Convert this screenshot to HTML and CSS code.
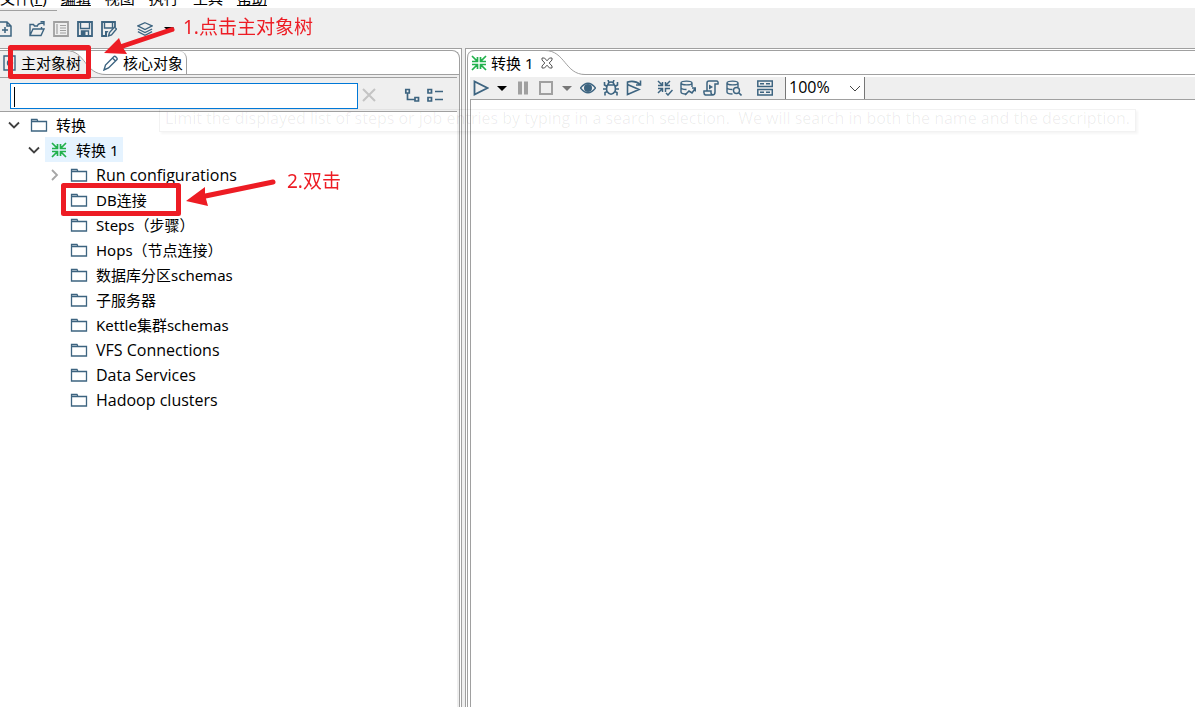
FILE: index.html
```html
<!DOCTYPE html>
<html lang="zh-CN">
<head>
<meta charset="utf-8">
<title>Spoon - 转换 1</title>
<link rel="stylesheet" href="styles.css">
</head>
<body>
<svg class="defs" aria-hidden="true">
  <symbol id="folder" viewBox="0 0 18 16"><path d="M1.500 14V2.500h5.500l1 2h8.500V14z M1.500 4.500h7" fill="none" stroke="#3d6480" stroke-width="1.300"/></symbol>
  <symbol id="trans" viewBox="0 0 16 16"><path d="M1 1l5 5M15 1l-5 5M1 15l5-5M15 15l-5-5M6.500 2v4.500H1M9.500 2v4.500H15M6.500 14V9.500H1M9.500 14V9.500H15" fill="none" stroke="currentColor" stroke-width="1.700"/></symbol>
  <symbol id="down" viewBox="0 0 16 16"><path d="M3 5.500l5 5 5-5" fill="none" stroke="#404040" stroke-width="1.800"/></symbol>
  <symbol id="caret" viewBox="0 0 16 16"><path d="M3 6h10l-5 5z" fill="currentColor"/></symbol>
  <symbol id="db" viewBox="0 0 16 16"><path d="M1 3c0-2.500 11-2.500 11 0s-11 2.500-11 0v9c0 1.500 3 2 5.500 2M12 3v4M1 7.500c0 1.500 3 2 5.500 2" fill="none" stroke="currentColor" stroke-width="1.400"/></symbol>
</svg>

<nav class="menu">
  <a href="#">文件(<u>F</u>)</a><a href="#"><u>编辑</u></a><a href="#">视图</a><a href="#">执行</a><a href="#">工具</a><a href="#"><u>帮助</u></a>
</nav>

<header class="toolbar">
  <button aria-label="新建"><svg viewBox="0 0 16 16"><path d="M2 1h8l4 4v10H2zM10 1v4h4M5 9h6M8 6v6" fill="none" stroke="currentColor" stroke-width="1.500"/></svg></button>
  <i class="space"></i>
  <button aria-label="打开"><svg viewBox="0 0 16 16"><path d="M9 5H5.500L4.500 3.500H1V14.500h11l3-6.500H4L1 14.500M12.500 8V6M8.500 4.500c1-2 3-2.500 6-2.500M11.500 .500h3.500v4" fill="none" stroke="currentColor" stroke-width="1.400"/></svg></button>
  <button class="off" aria-label="资源库"><svg viewBox="0 0 16 16"><path d="M1 1h14v14H1z" fill="none" stroke="currentColor" stroke-width="1.800"/><path d="M4 3v10M7 4.500h6M7 7h6M7 9.500h6M7 12h6" stroke="currentColor" stroke-width="1.200"/></svg></button>
  <button aria-label="保存"><svg viewBox="0 0 16 16"><path d="M1 1h14v14H1z" fill="none" stroke="currentColor" stroke-width="1.800"/><path d="M3.500 1.500v6h9v-6M4.500 14.500v-4.500h7v4.500" fill="none" stroke="currentColor" stroke-width="1.400"/><path d="M4.500 10h4v5h-4z" fill="currentColor"/></svg></button>
  <button aria-label="另存为"><svg viewBox="0 0 16 16"><path d="M6 15H1V1h13v5" fill="none" stroke="currentColor" stroke-width="1.800"/><path d="M3.500 1.500v5.500h8v-5.500" fill="none" stroke="currentColor" stroke-width="1.400"/><path d="M4 10h3.500l-1.500 2v3H4z" fill="currentColor"/><path d="M7.500 15l1-3.500L13.500 6l2 2-5 6z" fill="none" stroke="currentColor" stroke-width="1.400"/></svg></button>
  <i class="space wide"></i>
  <button aria-label="透视图"><svg viewBox="0 0 18 16"><path d="M9 1l8 3.500L9 8.500 1 4.500zM1 8l8 4 8-4M1 11l8 4 8-4" fill="none" stroke="currentColor" stroke-width="1.400"/></svg></button>
  <button class="black" aria-label="更多"><svg><use href="#caret"/></svg></button>
</header>

<main class="panes">
  <section class="pane side">
    <div class="folder">
      <div class="tabs" role="tablist">
        <svg class="curve" viewBox="0 0 106 25"><path d="M0 0H66C86 0 84 24.500 106 24.500V25H0z" fill="#efefef"/><path d="M0 .5H66C86 .5 84 24.500 106 24.500" fill="none" stroke="#a0a0a0"/></svg>
        <button class="tab main-tab" role="tab" aria-selected="true"><svg class="steel" viewBox="0 0 16 16"><path d="M3 1h11v14H3z" fill="none" stroke="currentColor" stroke-width="1.400"/><circle cx="9" cy="8" r="2.500" fill="none" stroke="currentColor" stroke-width="1.400"/></svg>主对象树</button>
        <button class="tab core-tab" role="tab" aria-selected="false"><svg class="steel" viewBox="0 0 16 16"><path d="M1 15l1.500-5L11 1.500c1-1 4 2 3 3L5.500 13zM9.500 3l3.500 3.500" fill="none" stroke="currentColor" stroke-width="1.400"/></svg>核心对象</button>
      </div>
      <div class="content">
        <div class="search">
          <input class="field" type="text" aria-label="搜索" autofocus>
          <span class="cursor"></span>
          <button class="clear" aria-label="清除"><svg viewBox="0 0 16 16"><path d="M2 2l12 12M14 2L2 14" stroke="currentColor" stroke-width="2"/></svg></button>
          <button aria-label="展开"><svg viewBox="0 0 16 16"><path d="M1.800 2.500h3.500v3.500h-3.500zM11 10.500h3.500v3.500h-3.500zM3.500 6v6.500H11" fill="none" stroke="currentColor" stroke-width="1.700"/></svg></button>
          <button aria-label="折叠"><svg viewBox="0 0 16 16"><path d="M1 2.500h3.500v3.500H1zM1 10.500h3.500v3.500H1zM8 4.500h8M8 12.500h8" fill="none" stroke="currentColor" stroke-width="1.700"/></svg></button>
        </div>
        <ul class="tree" role="tree">
          <li role="treeitem"><div class="row"><svg class="twist"><use href="#down"/></svg><span class="item"><svg><use href="#folder"/></svg>转换</span></div>
            <ul role="group">
              <li role="treeitem"><div class="row"><svg class="twist"><use href="#down"/></svg><span class="item selected"><svg class="green"><use href="#trans"/></svg>转换 1</span></div>
                <ul role="group">
                  <li class="row" role="treeitem"><svg class="twist" viewBox="0 0 16 16"><path d="M6 3l5 5-5 5" fill="none" stroke="#a6a6a6" stroke-width="1.800"/></svg><span class="item latin"><svg><use href="#folder"/></svg>Run configurations</span></li>
                  <li class="row" role="treeitem"><i class="twist"></i><span class="item"><svg><use href="#folder"/></svg>DB连接</span></li>
                  <li class="row" role="treeitem"><i class="twist"></i><span class="item"><svg><use href="#folder"/></svg>Steps（步骤）</span></li>
                  <li class="row" role="treeitem"><i class="twist"></i><span class="item"><svg><use href="#folder"/></svg>Hops（节点连接）</span></li>
                  <li class="row" role="treeitem"><i class="twist"></i><span class="item"><svg><use href="#folder"/></svg>数据库分区schemas</span></li>
                  <li class="row" role="treeitem"><i class="twist"></i><span class="item"><svg><use href="#folder"/></svg>子服务器</span></li>
                  <li class="row" role="treeitem"><i class="twist"></i><span class="item"><svg><use href="#folder"/></svg>Kettle集群schemas</span></li>
                  <li class="row" role="treeitem"><i class="twist"></i><span class="item latin"><svg><use href="#folder"/></svg>VFS Connections</span></li>
                  <li class="row" role="treeitem"><i class="twist"></i><span class="item latin"><svg><use href="#folder"/></svg>Data Services</span></li>
                  <li class="row" role="treeitem"><i class="twist"></i><span class="item latin"><svg><use href="#folder"/></svg>Hadoop clusters</span></li>
                </ul>
              </li>
            </ul>
          </li>
        </ul>
      </div>
    </div>
  </section>

  <section class="pane editor">
    <div class="folder">
      <div class="tabs" role="tablist">
        <svg class="curve" viewBox="0 0 118 25"><path d="M0 25V8Q0 .5 8 .5H78C98 .5 98 24.500 118 24.500V25z" fill="#fff"/><path d="M.5 25V8Q.5 .5 8 .5H78C98 .5 98 24.500 118 24.500" fill="none" stroke="#a0a0a0"/></svg>
        <button class="tab" role="tab" aria-selected="true"><svg class="green"><use href="#trans"/></svg>转换 1</button>
        <button class="close" aria-label="关闭"><svg viewBox="0 0 12 12"><path d="M1 1h2.500L6 3.800 8.500 1H11v2L8.200 6 11 9v2H8.500L6 8.200 3.500 11H1V9l2.800-3L1 3z" fill="none" stroke="#555"/></svg></button>
      </div>
      <div class="actions">
        <button aria-label="运行"><svg viewBox="0 0 16 16"><path d="M1.500 1.500v13L14.500 8z" fill="none" stroke="currentColor" stroke-width="1.800"/></svg></button>
        <button class="slim black" aria-label="运行选项"><svg><use href="#caret"/></svg></button>
        <button class="off" aria-label="暂停"><svg viewBox="0 0 16 16"><path d="M5 1.500v13M11 1.500v13" stroke="currentColor" stroke-width="4"/></svg></button>
        <button class="off" aria-label="停止"><svg viewBox="0 0 16 16"><path d="M2 2h12v12H2z" fill="none" stroke="currentColor" stroke-width="2"/></svg></button>
        <button class="slim gray" aria-label="停止选项"><svg><use href="#caret"/></svg></button>
        <button aria-label="预览"><svg viewBox="0 0 16 16"><path d="M.5 8Q8-1.500 15.500 8 8 17.500.5 8z" fill="none" stroke="currentColor" stroke-width="1.300"/><circle cx="8" cy="8" r="4" fill="currentColor"/></svg></button>
        <button aria-label="调试"><svg viewBox="0 0 16 16"><path d="M4.500 5h7Q13 8 12 11.500 8 17 4 11.500 3 8 4.500 5zM5 5Q5 2 8 2t3 3M5 0l1 2.500M11 0l-1 2.500M4 9H0M12 9h4M4 6.500L1.500 5V2M12 6.500L14.500 5V2M4.500 11.500L2 12.500v3M11.500 11.500L14 12.500v3" fill="none" stroke="currentColor" stroke-width="1.600"/></svg></button>
        <button aria-label="重放"><svg viewBox="0 0 16 16"><path d="M1.500 4.500v10L13 9.500zM1.500 4V2Q9 0 14 4.500M14.500 .5v4.500H10" fill="none" stroke="currentColor" stroke-width="1.600"/></svg></button>
        <i class="space"></i>
        <button aria-label="验证"><svg viewBox="0 0 16 16"><path d="M1 1l4 4M13 1L9 5M1 13l4-4M5.500 2v3.500H1M8.500 2v3.500H13M5.500 12V8.500H1M8.500 12V8.500H13M9 13l2 2 4.500-5" fill="none" stroke="currentColor" stroke-width="1.500"/></svg></button>
        <button aria-label="影响分析"><svg viewBox="0 0 16 16"><use href="#db"/><path d="M5 15l4-4 3 2 3.500-5M12 8h3.500v3.500" fill="none" stroke="currentColor" stroke-width="1.600"/></svg></button>
        <button aria-label="SQL"><svg viewBox="0 0 16 16"><path d="M4 11V3q0-2 2-2h7.500q2 0 1.500 3h-3v8q0 3-2.500 3H2.500Q.5 14.500 1 11h7v2q.5 2 2 2" fill="none" stroke="currentColor" stroke-width="1.500"/><path d="M6 4.500v5L10 7z" fill="currentColor"/></svg></button>
        <button aria-label="浏览数据库"><svg viewBox="0 0 16 16"><use href="#db"/><circle cx="10.500" cy="10.500" r="3" fill="none" stroke="currentColor" stroke-width="1.400"/><path d="M13 13l2.500 2.500" stroke="currentColor" stroke-width="1.600"/></svg></button>
        <i class="space"></i>
        <button aria-label="显示结果"><svg viewBox="0 0 16 16"><path d="M.8 1h14.500v5.500H.8zM.8 9.500h14.500V15H.8zM3 3.800h4M9 3.800h4M3 12.300h4M9 12.300h4" fill="none" stroke="currentColor" stroke-width="1.500"/></svg></button>
        <i class="space"></i>
        <label class="zoom"><select aria-label="缩放"><option>100%</option></select><svg viewBox="0 0 16 16"><path d="M3 6l5 5 5-5" fill="none" stroke="#444"/></svg></label>
      </div>
      <div class="canvas"></div>
    </div>
  </section>
</main>

<div class="tooltip">Limit the displayed list of steps or job entries by typing in a search selection.&nbsp; We will search in both the name and the description.</div>

<svg class="marks" viewBox="0 0 400 240" aria-hidden="true">
  <g fill="none" stroke="#ed1c24" stroke-linejoin="round">
    <rect x="10.500" y="47.500" width="78" height="29" stroke-width="5"/>
    <rect x="63.500" y="185.500" width="115" height="28" stroke-width="5"/>
    <path d="M172 29.500L120 47M273 182L203 196.500" stroke-width="5" stroke-linecap="round"/>
  </g>
  <path d="M104 53L119 38 122 46 127 54zM186 201L205 187 205 195 208 206z" fill="#ed1c24"/>
</svg>
<span class="note first">1.点击主对象树</span>
<span class="note second">2.双击</span>
</body>
</html>
```

FILE: styles.css
```css
* { box-sizing: border-box; }
body {
  margin: 0;
  height: 100vh;
  display: flex;
  flex-direction: column;
  overflow: hidden;
  position: relative;
  background: #fff;
  color: #000;
  font: 15px/24px "Noto Sans", "Noto Sans CJK SC", sans-serif;
}
button {
  border: 0;
  padding: 0;
  background: none;
  color: #3d6480;
  font: inherit;
  flex: none;
  display: flex;
  align-items: center;
  justify-content: center;
}
svg { width: 16px; height: 16px; flex: none; }
ul { margin: 0; padding: 0; list-style: none; }
.defs { position: absolute; width: 0; height: 0; }
.green { color: #22b14c; }
.steel { color: #3d6480; }
.off { color: #a0a0a0; }
.black { color: #000; }
.gray { color: #777; }
.space { width: 8px; flex: none; }
.space.wide { width: 12px; }

.menu {
  height: 8px;
  flex: none;
  display: flex;
  align-items: flex-end;
  gap: 14px;
  overflow: hidden;
}
.menu a { color: #000; text-decoration: none; white-space: nowrap; line-height: 20px; }

.toolbar {
  height: 40px;
  flex: none;
  display: flex;
  align-items: center;
  padding-top: 2px;
  background: linear-gradient(#a0a0a0, #a0a0a0) 0 2px / 57px 1px no-repeat #efefef;
}
.toolbar button { width: 24px; height: 24px; }
.toolbar button:first-child { margin-left: -7px; }

.panes { flex: 1; min-height: 0; display: flex; gap: 3px; background: #efefef; }
.pane { border-top: 1px solid #a0a0a0; padding-top: 1px; background: #fff; display: flex; }
.side { flex: 0 0 38.66%; border-right: 1px solid #a0a0a0; padding-right: 1px; }
.editor { flex: 1; min-width: 0; border-left: 1px solid #a0a0a0; padding-left: 1px; }
.folder { flex: 1; min-width: 0; display: flex; flex-direction: column; border-top: 1px solid #a0a0a0; }
.side .folder { border-right: 1px solid #a0a0a0; border-top-right-radius: 8px; }
.editor .folder { border-left: 1px solid #a0a0a0; border-top-left-radius: 8px; }

.tabs {
  height: 24px;
  flex: none;
  display: flex;
  position: relative;
  border-bottom: 1px solid #a0a0a0;
}
.curve { position: absolute; left: 0; top: -1px; height: 25px; width: 106px; }
.editor .curve { left: -1px; width: 118px; }
.tab { position: relative; gap: 4px; color: #000; }
.main-tab { padding-left: 1px; }
.core-tab {
  margin-left: 22px;
  padding-right: 3px;
  border-right: 1px solid #a0a0a0;
  border-top-right-radius: 8px;
}
.editor .tab { padding-left: 3px; }
.close { position: relative; margin-left: 8px; }
.close svg { width: 12px; height: 12px; }

.content {
  flex: 1;
  min-height: 0;
  display: flex;
  flex-direction: column;
  background: #efefef;
  padding: 2px 2px 0 0;
}
.search {
  display: flex;
  align-items: center;
  flex: none;
  height: 35px;
  padding: 2px 10px 0;
  border-top: 1px solid #a0a0a0;
  border-bottom: 1px solid #a0a0a0;
  position: relative;
}
.search button { width: 23px; height: 24px; padding-bottom: 2px; }
.field {
  flex: 1;
  min-width: 0;
  height: 26px;
  border: 1px solid #0078d7;
  border-radius: 0;
  outline: 0;
  padding: 0 4px;
  background: #fff;
  font: inherit;
  caret-color: transparent;
}
.cursor { position: absolute; left: 14px; top: 9px; width: 1px; height: 20px; background: #000; }
.search .clear { color: #c4c4c4; margin-right: 20px; }

.tree { flex: 1; background: #fff; }
.tree ul { padding-left: 20px; }
.row { display: flex; align-items: center; height: 25px; padding-left: 6px; }
.twist { width: 16px; margin-right: 3px; flex: none; }
.item { display: flex; align-items: center; gap: 8px; height: 25px; padding: 0 5px; white-space: nowrap; }
.item svg { width: 18px; }
.latin { font-family: "Open Sans", sans-serif; font-size: 16px; }
.selected { background: #e5f3ff; }

.actions {
  display: flex;
  align-items: center;
  flex: none;
  height: 25px;
  margin-left: 2px;
  border-top: 2px solid #fff;
  border-bottom: 1px solid #a0a0a0;
  background: #efefef;
}
.actions button { width: 23px; height: 22px; }
.actions .slim { width: 19px; }
.zoom { display: flex; height: 22px; position: relative; align-items: center; }
.zoom select {
  appearance: none;
  width: 80px;
  height: 22px;
  border: 1px solid #777;
  border-width: 0 1px;
  border-radius: 0;
  background: #fff;
  padding: 0 3px 2px;
  color: #000;
  font: 16px/20px "Open Sans", sans-serif;
}
.zoom svg { position: absolute; right: 2px; pointer-events: none; }
.canvas { flex: 1; margin-left: 2px; border-left: 1px solid #a0a0a0; }

.tooltip {
  position: absolute;
  left: 159px;
  top: 109px;
  padding: 0 5px 4px;
  font: 16px/17px "Open Sans", sans-serif;
  border: 1px solid rgba(0, 0, 0, .05);
  box-shadow: 2px 2px 2px rgba(0, 0, 0, .04);
  color: rgba(0, 0, 0, .07);
  white-space: nowrap;
  pointer-events: none;
}
.marks { position: absolute; left: 0; top: 0; width: 400px; height: 240px; pointer-events: none; }
.note { position: absolute; color: #ed1c24; font-size: 19px; white-space: nowrap; }
.first { left: 183px; top: 15px; }
.second { left: 287px; top: 169px; }
```
